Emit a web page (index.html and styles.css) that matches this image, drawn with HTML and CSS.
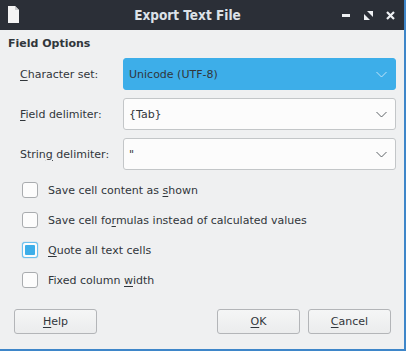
FILE: index.html
```html
<!DOCTYPE html>
<html lang="en">

<head>
    <meta charset="UTF-8">
    <title>Export Text File</title>
    <link rel="stylesheet" href="styles.css">
</head>

<body>
    <div class="window">
        <div class="titlebar">
            <svg class="app-icon" width="11" height="17" viewBox="0 0 11 17">
                <path d="M0 0 H7 L11 4 V17 H0 Z" fill="#f4f4f4"/>
                <path d="M7 0 V4 H11" fill="#c9cbce"/>
            </svg>
            <div class="title">Export Text File</div>
            <div class="controls">
                <svg width="9" height="9" viewBox="0 0 9 9"><rect x="0" y="3" width="8" height="3" fill="#eef0f3"/></svg>
                <svg width="9" height="9" viewBox="0 0 9 9">
                    <path d="M3 0 H9 V6 Z" fill="#eef0f3"/>
                    <path d="M0 3 V9 H6 Z" fill="#eef0f3"/>
                </svg>
                <svg width="9" height="9" viewBox="0 0 9 9">
                    <path d="M1 1 L8 8 M8 1 L1 8" stroke="#eef0f3" stroke-width="2.2"/>
                </svg>
            </div>
        </div>

        <div class="content">
            <div class="heading">Field Options</div>

            <div class="fields">
                <label><u>C</u>haracter set:</label>
                <div class="combo active">
                    <span>Unicode (UTF-8)</span>
                    <svg width="11" height="7" viewBox="0 0 11 7"><polyline points="0.5,1 5.5,6 10.5,1" fill="none" stroke="#cfeafa" stroke-width="0.9"/></svg>
                </div>

                <label><u>F</u>ield delimiter:</label>
                <div class="combo">
                    <span>{Tab}</span>
                    <svg width="11" height="7" viewBox="0 0 11 7"><polyline points="0.5,1 5.5,6 10.5,1" fill="none" stroke="#4d5257" stroke-width="0.9"/></svg>
                </div>

                <label>Strin<u>g</u> delimiter:</label>
                <div class="combo">
                    <span>"</span>
                    <svg width="11" height="7" viewBox="0 0 11 7"><polyline points="0.5,1 5.5,6 10.5,1" fill="none" stroke="#4d5257" stroke-width="0.9"/></svg>
                </div>
            </div>

            <ul class="checks">
                <li><span class="box"></span><span>Save cell content as <u>s</u>hown</span></li>
                <li><span class="box"></span><span>Save cell fo<u>r</u>mulas instead of calculated values</span></li>
                <li><span class="box checked"></span><span><u>Q</u>uote all text cells</span></li>
                <li><span class="box"></span><span>Fixed column <u>w</u>idth</span></li>
            </ul>

            <div class="buttons">
                <button type="button"><u>H</u>elp</button>
                <div class="spacer"></div>
                <button type="button"><u>O</u>K</button>
                <button type="button"><u>C</u>ancel</button>
            </div>
        </div>
    </div>
</body>

</html>
```

FILE: styles.css
```css
html, body {
    margin: 0;
    padding: 0;
}

body {
    font-family: "DejaVu Sans", "Liberation Sans", sans-serif;
    font-size: 11px;
    color: #31363b;
    background: #eff0f1;
    width: 406px;
    height: 351px;
    overflow: hidden;
}

u {
    text-decoration-thickness: 1px;
    text-underline-offset: 2px;
}

.window {
    box-sizing: border-box;
    width: 406px;
    height: 351px;
    border-right: 2px solid #3e86c9;
    border-bottom: 2px solid #3e86c9;
    background: #eff0f1;
}

.titlebar {
    height: 30px;
    background: #2b2f37;
    display: flex;
    align-items: center;
    padding: 0 8px;
}

.app-icon {
    margin-top: -1px;
}

.title {
    flex: 1;
    text-align: center;
    font-family: "DejaVu Sans Condensed", "DejaVu Sans", sans-serif;
    font-stretch: condensed;
    font-weight: bold;
    font-size: 13.5px;
    color: #dde2e8;
    padding-left: 14px;
}

.controls {
    display: flex;
    align-items: center;
    gap: 13px;
    padding-right: 1px;
}

.content {
    padding: 7px 8px 0 8px;
}

.heading {
    font-weight: bold;
    line-height: 14px;
}

.fields {
    display: grid;
    grid-template-columns: 103px 1fr;
    grid-auto-rows: 32px;
    row-gap: 8px;
    padding-left: 12px;
    margin-top: 7px;
    align-items: center;
}

.combo {
    box-sizing: border-box;
    height: 100%;
    background: #fcfcfc;
    border: 1px solid #c3c6c8;
    border-radius: 3px;
    display: flex;
    align-items: center;
    justify-content: space-between;
    padding: 0 8px 0 5px;
}

.combo.active {
    background: #3daee9;
    border-color: #3daee9;
}

.checks {
    list-style: none;
    margin: 12px 0 0 0;
    padding: 0 0 0 14px;
    display: flex;
    flex-direction: column;
    gap: 14px;
}

.checks li {
    display: flex;
    align-items: center;
    height: 16px;
    gap: 10px;
}

.box {
    box-sizing: border-box;
    width: 16px;
    height: 16px;
    border: 1px solid #a9acaf;
    border-radius: 3px;
    background: #fcfcfc;
    display: flex;
    align-items: center;
    justify-content: center;
}

.box.checked {
    border-color: #6bc0ee;
    box-shadow: 0 0 1px #3daee9;
}

.box.checked::after {
    content: "";
    width: 10px;
    height: 10px;
    background: #3daee9;
    border-radius: 1px;
}

.buttons {
    display: flex;
    gap: 8px;
    margin-top: 21px;
    padding: 0 5px 0 6px;
}

.spacer {
    flex: 1;
}

button {
    box-sizing: border-box;
    width: 83px;
    height: 25px;
    font: inherit;
    color: inherit;
    background: linear-gradient(#f5f6f6, #ebeced);
    border: 1px solid #b3b5b8;
    border-radius: 3px;
    padding: 0;
}
```
